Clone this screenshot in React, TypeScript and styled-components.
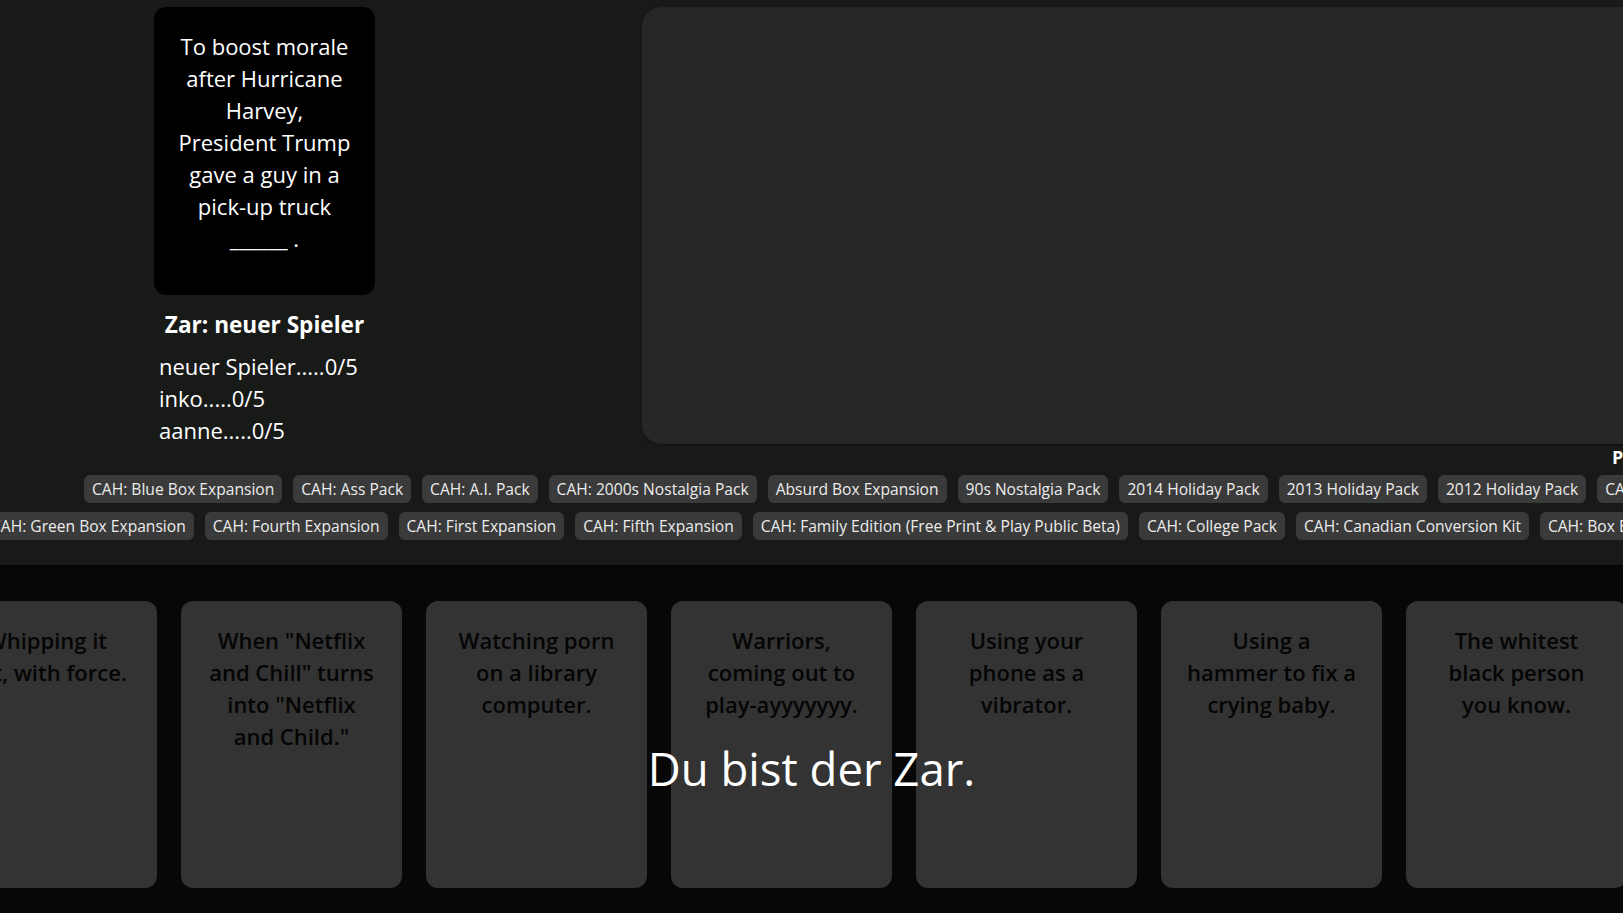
import React from "react";
import styled, { createGlobalStyle } from "styled-components";

const GlobalStyle = createGlobalStyle`
  html, body {
    margin: 0;
    padding: 0;
    background: #181a18;
    overflow: hidden;
  }
  body {
    font-family: "Open Sans", "Noto Sans", sans-serif;
    color: #ffffff;
  }
  * { box-sizing: border-box; }
`;

const Page = styled.div`
  width: 100vw;
  height: 100vh;
  display: flex;
  flex-direction: column;
  overflow: hidden;
  background: #181a18;
`;

const Top = styled.section`
  display: flex;
  align-items: flex-start;
  gap: 267px;
  padding: 7px 0 0 154px;
  flex-shrink: 0;
`;

const LeftColumn = styled.div`
  width: 221px;
  flex-shrink: 0;
  display: flex;
  flex-direction: column;
`;

const CardBase = styled.div`
  width: 221px;
  height: 288px;
  flex-shrink: 0;
  border-radius: 12px;
  padding: 23px 8px 0;
  text-align: center;
  font-size: 22px;
  line-height: 32px;
`;

const BlackCard = styled(CardBase)`
  background: #000000;
  color: #ffffff;
`;

const Line = styled.span`
  display: block;
  white-space: nowrap;
`;

const CzarTitle = styled.h3`
  margin: 15px 0 0;
  text-align: center;
  font-size: 22.6px;
  line-height: 30px;
  font-weight: 700;
  color: #ffffff;
  white-space: nowrap;
`;

const ScoreList = styled.div`
  margin-top: 10px;
  padding-left: 5px;
  display: flex;
  flex-direction: column;
`;

const ScoreRow = styled.div`
  font-size: 22px;
  line-height: 32px;
  white-space: nowrap;
`;

const Board = styled.div`
  width: 1100px;
  height: 437px;
  flex-shrink: 0;
  background: #272727;
  border-radius: 20px;
  box-shadow: 0 1px 2px rgba(0, 0, 0, 0.35);
`;

const PacksHeading = styled.div`
  margin-top: 1px;
  padding-left: 1612px;
  font-size: 18px;
  line-height: 20px;
  font-weight: 700;
  white-space: nowrap;
  flex-shrink: 0;
`;

const PackRows = styled.div`
  margin-top: 8px;
  display: flex;
  flex-direction: column;
  gap: 9px;
  padding-bottom: 25px;
  flex-shrink: 0;
`;

const PackRow = styled.div<{ $offset: number }>`
  display: flex;
  gap: 11px;
  margin-left: ${(p) => p.$offset}px;
  white-space: nowrap;
`;

const PackTag = styled.span`
  flex-shrink: 0;
  background: #3a3a3a;
  color: #ececec;
  border-radius: 6px;
  padding: 4px 8px;
  font-size: 15.6px;
  line-height: 20px;
`;

const Hand = styled.section`
  position: relative;
  flex: 1;
  background: #070707;
  padding-top: 36px;
`;

const HandCards = styled.div<{ $offset: number }>`
  display: flex;
  gap: 24px;
  margin-left: ${(p) => p.$offset}px;
`;

const WhiteCard = styled(CardBase)`
  height: 287px;
  background: #333333;
  color: #050505;
  font-weight: 600;
`;

const CzarNotice = styled.div`
  position: absolute;
  left: 0;
  right: 0;
  top: 172px;
  text-align: center;
  font-size: 45.5px;
  color: #ffffff;
  pointer-events: none;
`;

const blackCardLines = [
  "To boost morale",
  "after Hurricane",
  "Harvey,",
  "President Trump",
  "gave a guy in a",
  "pick-up truck",
  "______ .",
];

const players = [
  { name: "neuer Spieler", score: 0 },
  { name: "inko", score: 0 },
  { name: "aanne", score: 0 },
];

const packRowA = [
  "CAH: Blue Box Expansion",
  "CAH: Ass Pack",
  "CAH: A.I. Pack",
  "CAH: 2000s Nostalgia Pack",
  "Absurd Box Expansion",
  "90s Nostalgia Pack",
  "2014 Holiday Pack",
  "2013 Holiday Pack",
  "2012 Holiday Pack",
  "CAH: Main Deck",
];

const packRowB = [
  "CAH: Green Box Expansion",
  "CAH: Fourth Expansion",
  "CAH: First Expansion",
  "CAH: Fifth Expansion",
  "CAH: Family Edition (Free Print & Play Public Beta)",
  "CAH: College Pack",
  "CAH: Canadian Conversion Kit",
  "CAH: Box Expansion",
];

const handCards = [
  ["Whipping it", "out, with force."],
  ["When \"Netflix", "and Chill\" turns", "into \"Netflix", "and Child.\""],
  ["Watching porn", "on a library", "computer."],
  ["Warriors,", "coming out to", "play-ayyyyyyy."],
  ["Using your", "phone as a", "vibrator."],
  ["Using a", "hammer to fix a", "crying baby."],
  ["The whitest", "black person", "you know."],
];

export default function App() {
  return (
    <>
      <GlobalStyle />
      <Page>
        <Top>
          <LeftColumn>
            <BlackCard>
              {blackCardLines.map((l, i) => (
                <Line key={i}>{l}</Line>
              ))}
            </BlackCard>
            <CzarTitle>Zar: neuer Spieler</CzarTitle>
            <ScoreList>
              {players.map((p) => (
                <ScoreRow key={p.name}>
                  {p.name}.....{p.score}/5
                </ScoreRow>
              ))}
            </ScoreList>
          </LeftColumn>
          <Board />
        </Top>
        <PacksHeading>Packs</PacksHeading>
        <PackRows>
          <PackRow $offset={84}>
            {packRowA.map((t) => (
              <PackTag key={t}>{t}</PackTag>
            ))}
          </PackRow>
          <PackRow $offset={-17}>
            {packRowB.map((t) => (
              <PackTag key={t}>{t}</PackTag>
            ))}
          </PackRow>
        </PackRows>
        <Hand>
          <HandCards $offset={-64}>
            {handCards.map((lines, i) => (
              <WhiteCard key={i}>
                {lines.map((l, j) => (
                  <Line key={j}>{l}</Line>
                ))}
              </WhiteCard>
            ))}
          </HandCards>
          <CzarNotice>Du bist der Zar.</CzarNotice>
        </Hand>
      </Page>
    </>
  );
}
